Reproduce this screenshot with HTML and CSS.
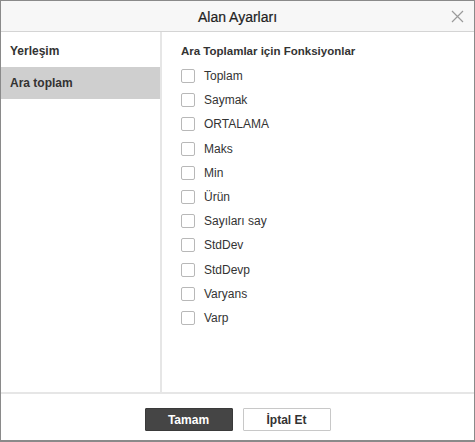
FILE: index.html
```html
<!DOCTYPE html>
<html lang="tr">
<head>
<meta charset="utf-8">
<title>Alan Ayarları</title>
<link rel="stylesheet" href="styles.css">
</head>
<body>
<div class="dialog">
  <div class="header">
    <span class="title">Alan Ayarları</span>
    <button class="close" aria-label="Kapat">
      <svg width="13" height="13" viewBox="0 0 13 13"><path d="M1 1L12 12M12 1L1 12" stroke="#9a9a9a" stroke-width="1.2" fill="none"/></svg>
    </button>
  </div>
  <div class="body">
    <div class="sidebar">
      <div class="nav-item">Yerleşim</div>
      <div class="nav-item active">Ara toplam</div>
    </div>
    <div class="content">
      <div class="heading">Ara Toplamlar için Fonksiyonlar</div>
      <ul class="options">
        <li class="option"><span class="box"></span>Toplam</li>
        <li class="option"><span class="box"></span>Saymak</li>
        <li class="option"><span class="box"></span>ORTALAMA</li>
        <li class="option"><span class="box"></span>Maks</li>
        <li class="option"><span class="box"></span>Min</li>
        <li class="option"><span class="box"></span>Ürün</li>
        <li class="option"><span class="box"></span>Sayıları say</li>
        <li class="option"><span class="box"></span>StdDev</li>
        <li class="option"><span class="box"></span>StdDevp</li>
        <li class="option"><span class="box"></span>Varyans</li>
        <li class="option"><span class="box"></span>Varp</li>
      </ul>
    </div>
  </div>
  <div class="footer">
    <button class="btn primary">Tamam</button>
    <button class="btn secondary">İptal Et</button>
  </div>
</div>
</body>
</html>
```
FILE: styles.css
```css
* { box-sizing: border-box; }
html, body { margin: 0; padding: 0; background: #fff; }
body {
  font-family: "Liberation Sans", Arial, sans-serif;
  color: #333;
  width: 475px;
  height: 442px;
}
.dialog {
  width: 475px;
  height: 442px;
  border: 1px solid #8a8a8a;
  border-bottom-width: 2px;
  display: flex;
  flex-direction: column;
}
.header {
  height: 31px;
  flex: none;
  background: #f7f7f7;
  border-bottom: 1px solid #d4d4d4;
  display: flex;
  align-items: center;
  justify-content: center;
  position: relative;
}
.title {
  font-size: 14px;
  color: #222;
  padding-top: 1px;
  -webkit-text-stroke: 0.2px #222;
}
.close {
  position: absolute;
  right: 9px;
  top: 8px;
  width: 15px;
  height: 15px;
  padding: 1px;
  border: 0;
  background: none;
  display: flex;
}
.body {
  flex: 1;
  display: flex;
  border-bottom: 2px solid #e6e6e6;
}
.sidebar {
  width: 161px;
  flex: none;
  border-right: 2px solid #e6e6e6;
  padding-top: 2px;
}
.nav-item {
  height: 33px;
  display: flex;
  align-items: center;
  padding-left: 9px;
  font-size: 12px;
  font-weight: bold;
  color: #333;
}
.nav-item.active {
  background: #cfcfcf;
  height: 32px;
}
.content {
  flex: 1;
  padding: 12px 0 0 19px;
}
.heading {
  font-size: 11.5px;
  font-weight: bold;
  color: #333;
  height: 14px;
  line-height: 14px;
  margin-bottom: 6px;
}
.options {
  list-style: none;
  margin: 0;
  padding: 0;
}
.option {
  height: 24.2px;
  display: flex;
  align-items: center;
  font-size: 12px;
  color: #333;
}
.box {
  width: 14px;
  height: 14px;
  border: 1px solid #b8b8b8;
  border-radius: 2px;
  background: #fff;
  margin-right: 9px;
  flex: none;
}
.footer {
  height: 46px;
  flex: none;
  display: flex;
  justify-content: center;
  align-items: flex-start;
  padding-top: 14px;
  gap: 10px;
}
.btn {
  width: 88px;
  height: 23px;
  font-family: "Liberation Sans", Arial, sans-serif;
  font-size: 12px;
  font-weight: bold;
  border-radius: 1px;
  padding: 0;
}
.primary {
  background: #454545;
  color: #fff;
  border: 1px solid #3a3a3a;
}
.secondary {
  background: #fff;
  color: #333;
  border: 1px solid #c8c8c8;
}
```
